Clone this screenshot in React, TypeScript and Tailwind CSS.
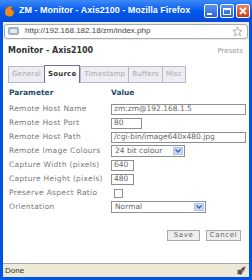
import React from "react";

const ui = { fontFamily: '"DejaVu Sans", Verdana, sans-serif' };
const sys = { fontFamily: '"Liberation Sans", Tahoma, Arial, sans-serif' };

function Field({ w, value }: { w: string; value: string }) {
  return (
    <div className={`${w} h-[11px] border border-[#8f8f8f] bg-white flex items-center px-[2px] text-[7.5px] text-[#666] leading-none`}>
      {value}
    </div>
  );
}

function Select({ w, value }: { w: string; value: string }) {
  return (
    <div className={`${w} h-[12px] border border-[#8f8f8f] bg-white flex items-center justify-between pl-[3px] pr-[1px] text-[7.5px] text-[#666] leading-none`}>
      <span>{value}</span>
      <span className="w-[10px] h-[8px] bg-[#c6d7f7] border border-[#b2c6ef] flex items-center justify-center">
        <svg width="6" height="4" viewBox="0 0 6 4">
          <path d="M0.5 0.5 L3 3 L5.5 0.5" fill="none" stroke="#3b5fa8" strokeWidth="1.3" />
        </svg>
      </span>
    </div>
  );
}

const rows: { label: string; value: React.ReactNode }[] = [
  { label: "Remote Host Name", value: <Field w="w-[135px]" value="zm:zm@192.168.1.5" /> },
  { label: "Remote Host Port", value: <Field w="w-[31px]" value="80" /> },
  { label: "Remote Host Path", value: <Field w="w-[135px]" value="/cgi-bin/image640x480.jpg" /> },
  { label: "Remote Image Colours", value: <Select w="w-[74px]" value="24 bit colour" /> },
  { label: "Capture Width (pixels)", value: <Field w="w-[23px]" value="640" /> },
  { label: "Capture Height (pixels)", value: <Field w="w-[23px]" value="480" /> },
  {
    label: "Preserve Aspect Ratio",
    value: <div className="ml-[3px] w-[9px] h-[9px] border border-[#8f8f8f] bg-white" />,
  },
  { label: "Orientation", value: <Select w="w-[95px]" value="Normal" /> },
];

const tabs = ["General", "Source", "Timestamp", "Buffers", "Misc"];

function WinButton({ kind }: { kind: "min" | "max" | "close" }) {
  const bg =
    kind === "close"
      ? "bg-linear-to-b from-[#e9825f] to-[#c73a12]"
      : "bg-linear-to-b from-[#5a93f5] to-[#2c62d9]";
  return (
    <div className={`w-[14px] h-[14px] rounded-[2px] border border-white ${bg} flex items-center justify-center`}>
      {kind === "min" && <div className="w-[5px] h-[2px] bg-white mt-[6px] -ml-[3px]" />}
      {kind === "max" && <div className="w-[8px] h-[7px] border border-white border-t-2" />}
      {kind === "close" && (
        <svg width="8" height="8" viewBox="0 0 8 8">
          <path d="M1 1 L7 7 M7 1 L1 7" stroke="white" strokeWidth="1.8" />
        </svg>
      )}
    </div>
  );
}

export default function App() {
  return (
    <div className="w-[252px] h-[280px] flex flex-col overflow-hidden bg-[#0054e3]" style={sys}>
      {/* Title bar */}
      <div className="h-[22px] shrink-0 flex items-center pl-[4px] pr-[2px] bg-linear-to-b from-[#3d8af7] via-[#0058ee] to-[#0a4cd6]">
        <svg width="12" height="12" viewBox="0 0 12 12" className="shrink-0">
          <circle cx="6" cy="6" r="5.5" fill="#2f5fb8" />
          <path d="M1 8 C1 3 5 0 9 2 C7 2 6 4 8 5 C11 6 10 11 6 11.5 C3 11.5 1 10 1 8 Z" fill="#f08a18" />
        </svg>
        <span className="ml-[3px] text-white font-bold text-[9px] whitespace-nowrap">
          ZM - Monitor - Axis2100 - Mozilla Firefox
        </span>
        <div className="ml-auto flex gap-[2px]">
          <WinButton kind="min" />
          <WinButton kind="max" />
          <WinButton kind="close" />
        </div>
      </div>

      <div className="flex-1 flex flex-col mx-[3px] mb-[3px] bg-white">
        {/* Address bar */}
        <div className="h-[18px] shrink-0 bg-[#efeee6] flex items-center px-[1px]">
          <div className="flex-1 h-[15px] rounded-[3px] border border-[#a5acb5] bg-white flex items-center px-[2px]">
            <svg width="13" height="10" viewBox="0 0 13 10" className="shrink-0">
              <rect x="1" y="1" width="11" height="8" rx="2" fill="#9fb3c6" />
              <rect x="3" y="3" width="7" height="4" rx="1" fill="#e2e9f0" />
            </svg>
            <span className="ml-[5px] text-[8px] text-[#444] leading-none">http://192.168.182.18/zm/index.php</span>
            <svg width="11" height="11" viewBox="0 0 24 24" className="ml-auto mr-[2px]">
              <path d="M12 2 L15 9 L22 9.5 L16.5 14 L18.5 21.5 L12 17.5 L5.5 21.5 L7.5 14 L2 9.5 L9 9 Z" fill="white" stroke="#8a9099" strokeWidth="1.5" />
            </svg>
          </div>
        </div>

        {/* Page */}
        <div className="flex-1 flex flex-col px-[4px] pt-[5px]" style={ui}>
          <div className="flex items-center justify-between h-[12px] pl-[1px] pr-[2px]">
            <span className="text-[8px] font-bold text-[#333]">Monitor - Axis2100</span>
            <span className="text-[7px] text-[#999]">Presets</span>
          </div>

          {/* Tabs */}
          <div className="mt-[8px] h-[18px] flex items-end pl-[1px]">
            {tabs.map((t) =>
              t === "Source" ? (
                <div key={t} className="h-[18px] px-[3px] flex items-center bg-white border border-[#6f6f99] border-b-0 text-[7px] font-bold text-[#333] tracking-[0.2px]">
                  {t}
                </div>
              ) : (
                <div key={t} className="h-[17px] px-[3px] flex items-center bg-[#ececf2] border border-[#b8b8d0] text-[7px] text-[#a8a8a8] tracking-[0.2px] -mr-px">
                  {t}
                </div>
              )
            )}
          </div>

          {/* Table */}
          <div className="mt-[3px] grid grid-cols-[102px_1fr] pl-[2px]">
            <div className="h-[14px] flex items-center text-[7.5px] font-bold text-[#1d4e6e]">Parameter</div>
            <div className="h-[14px] flex items-center text-[7.5px] font-bold text-[#1d4e6e]">Value</div>
            <div className="col-span-2 h-[2px]" />
            {rows.map((r) => (
              <React.Fragment key={r.label}>
                <div className="h-[14px] flex items-center text-[7.5px] text-[#777] tracking-[0.3px] whitespace-nowrap">{r.label}</div>
                <div className="h-[14px] flex items-center">{r.value}</div>
              </React.Fragment>
            ))}
          </div>

          <div className="mt-[16px] flex justify-end gap-[6px] pr-[4px]">
            <button className="w-[33px] h-[11px] bg-[#eeeeee] border border-[#a8a8a8] text-[7px] text-[#666] tracking-[0.6px] leading-none">
              Save
            </button>
            <button className="w-[35px] h-[11px] bg-[#eeeeee] border border-[#a8a8a8] text-[7px] text-[#666] tracking-[0.6px] leading-none">
              Cancel
            </button>
          </div>
        </div>

        {/* Status bar */}
        <div className="h-[14px] shrink-0 border-t border-[#a9a79b] bg-[#ece9d8] flex items-center pl-[2px] pr-[3px]">
          <span className="text-[8px] text-[#333] leading-none">Done</span>
          <svg width="10" height="10" viewBox="0 0 10 10" className="ml-auto">
            <circle cx="4" cy="6" r="2.5" fill="#555" />
            <circle cx="7" cy="3" r="1.6" fill="#444" />
            <path d="M1 4 L3 5 M1 8 L3 7 M5 9 L4 8 M8 5 L6 5 M8 1 L7 2" stroke="#666" strokeWidth="0.8" />
            <circle cx="8.5" cy="1.5" r="1" fill="#d33" />
          </svg>
        </div>
      </div>
    </div>
  );
}
